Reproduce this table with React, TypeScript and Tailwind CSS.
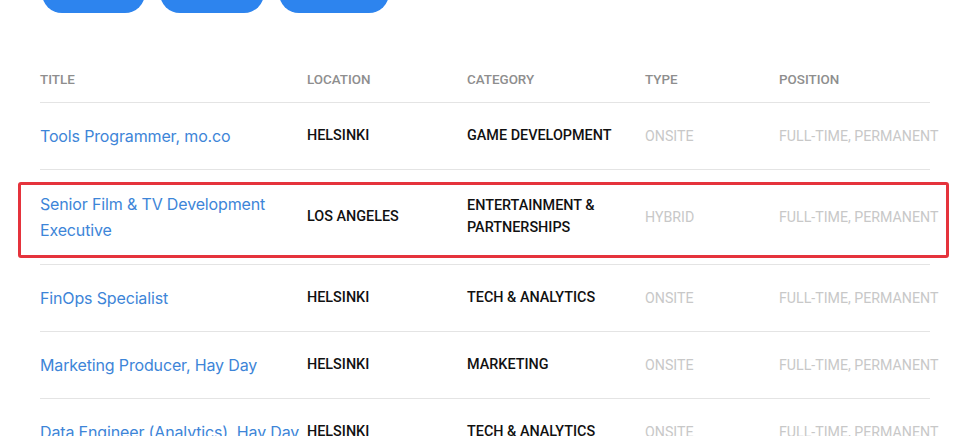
import React from 'react';

type Job = {
  title: string;
  location: string;
  category: string;
  type: string;
  position: string;
  highlight?: boolean;
};

const jobs: Job[] = [
  { title: 'Tools Programmer, mo.co', location: 'HELSINKI', category: 'GAME DEVELOPMENT', type: 'ONSITE', position: 'FULL-TIME, PERMANENT' },
  { title: 'Senior Film & TV Development Executive', location: 'LOS ANGELES', category: 'ENTERTAINMENT & PARTNERSHIPS', type: 'HYBRID', position: 'FULL-TIME, PERMANENT', highlight: true },
  { title: 'FinOps Specialist', location: 'HELSINKI', category: 'TECH & ANALYTICS', type: 'ONSITE', position: 'FULL-TIME, PERMANENT' },
  { title: 'Marketing Producer, Hay Day', location: 'HELSINKI', category: 'MARKETING', type: 'ONSITE', position: 'FULL-TIME, PERMANENT' },
  { title: 'Data Engineer (Analytics), Hay Day', location: 'HELSINKI', category: 'TECH & ANALYTICS', type: 'ONSITE', position: 'FULL-TIME, PERMANENT' },
];

export default function App() {
  return (
    <div className="w-[980px] h-[436px] overflow-hidden bg-white font-['Roboto',sans-serif]">
      {/* Filter pills (scrolled mostly out of view) */}
      <div className="flex gap-[15px] pl-[42px] -mt-[27px]">
        <div className="h-[40px] w-[103px] rounded-full bg-[#2d84ee]"></div>
        <div className="h-[40px] w-[104px] rounded-full bg-[#2d84ee]"></div>
        <div className="h-[40px] w-[110px] rounded-full bg-[#2d84ee]"></div>
      </div>

      <div className="ml-[40px] w-[890px] mt-[58px]">
        {/* Header */}
        <div className="flex border-b border-[#e4e4e4] pt-[1px] pb-[14px] text-[13.4px] leading-[16px] font-medium text-[#8e8e8e]">
          <div className="w-[267px] shrink-0">TITLE</div>
          <div className="w-[160px] shrink-0">LOCATION</div>
          <div className="w-[178px] shrink-0">CATEGORY</div>
          <div className="w-[134px] shrink-0">TYPE</div>
          <div className="flex-1">POSITION</div>
        </div>

        {/* Rows */}
        {jobs.map((job, i) => (
          <div
            key={i}
            className={`relative flex items-center border-b border-[#e4e4e4] ${job.highlight ? 'py-[21px]' : 'py-[20px]'}`}
          >
            {job.highlight && (
              <div className="absolute -left-[22px] -right-[19px] top-[12px] bottom-[6px] rounded-[3px] border-[3px] border-[#e5333c] pointer-events-none"></div>
            )}
            <div className="w-[267px] shrink-0 font-['Inter',sans-serif] text-[16px] leading-[26px] tracking-[-0.15px] text-[#3d85d8]">
              {job.title}
            </div>
            <div className="w-[160px] shrink-0 text-[14.4px] leading-[22px] font-medium text-[#111]">
              {job.location}
            </div>
            <div className="w-[178px] shrink-0 pr-[12px] text-[14.4px] leading-[22px] font-medium text-[#111]">
              {job.category}
            </div>
            <div className="w-[134px] shrink-0 text-[14.2px] leading-[22px] text-[#c8c8c8]">
              {job.type}
            </div>
            <div className="flex-1 whitespace-nowrap text-[14.2px] leading-[22px] text-[#c8c8c8]">
              {job.position}
            </div>
          </div>
        ))}
      </div>
    </div>
  );
}
